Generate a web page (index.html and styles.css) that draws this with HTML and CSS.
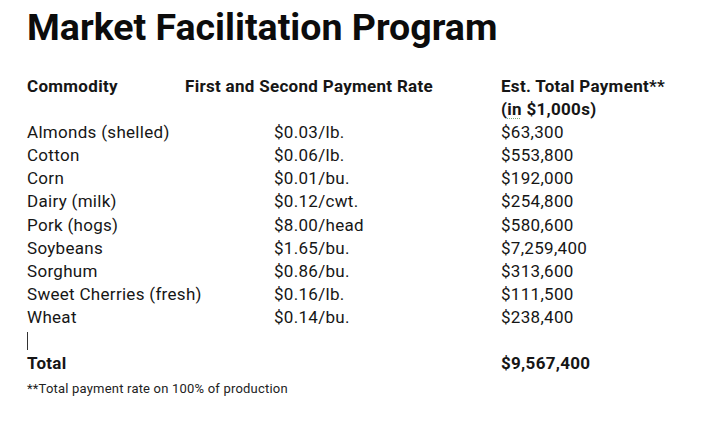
FILE: index.html
```html
<!DOCTYPE html>
<html>
<head>
<meta charset="utf-8">
<link rel="stylesheet" href="styles.css">
</head>
<body>
<div class="page">
  <h1 class="title">Market Facilitation Program</h1>
  <div class="head">
    <div class="hcell">Commodity</div>
    <div class="hcell">First and Second Payment Rate</div>
    <div class="hcell">Est. Total Payment**<br>(<span class="squiggle">in</span> $1,000s)</div>
  </div>
  <div class="rows">
    <div class="row"><span>Almonds (shelled)</span><span>$0.03/lb.</span><span>$63,300</span></div>
    <div class="row"><span>Cotton</span><span>$0.06/lb.</span><span>$553,800</span></div>
    <div class="row"><span>Corn</span><span>$0.01/bu.</span><span>$192,000</span></div>
    <div class="row"><span>Dairy (milk)</span><span>$0.12/cwt.</span><span>$254,800</span></div>
    <div class="row"><span>Pork (hogs)</span><span>$8.00/head</span><span>$580,600</span></div>
    <div class="row"><span>Soybeans</span><span>$1.65/bu.</span><span>$7,259,400</span></div>
    <div class="row"><span>Sorghum</span><span>$0.86/bu.</span><span>$313,600</span></div>
    <div class="row"><span>Sweet Cherries (fresh)</span><span>$0.16/lb.</span><span>$111,500</span></div>
    <div class="row"><span>Wheat</span><span>$0.14/bu.</span><span>$238,400</span></div>
    <div class="row empty"><span class="cursor"></span></div>
    <div class="row total"><span>Total</span><span></span><span>$9,567,400</span></div>
  </div>
  <p class="note">**Total payment rate on 100% of production</p>
</div>
</body>
</html>
```

FILE: styles.css
```css
html, body {
  margin: 0;
  padding: 0;
  background: #ffffff;
}
body {
  font-family: Roboto, "Liberation Sans", sans-serif;
  color: #161616;
  width: 720px;
  height: 421px;
  overflow: hidden;
}
.page {
  padding: 5px 0 0 27px;
}
.title {
  margin: 0;
  font-size: 37.5px;
  font-weight: 700;
  line-height: 44px;
  color: #0c0c0c;
}
.head {
  margin-top: 26px;
  display: grid;
  grid-template-columns: 158px 316px 1fr;
  font-size: 17px;
  font-weight: 700;
  line-height: 23.1px;
  letter-spacing: 0.3px;
}
.squiggle {
  text-decoration: underline dotted #7fae7f;
  text-decoration-thickness: 1px;
  text-underline-offset: 3px;
}
.rows {
  display: flex;
  flex-direction: column;
}
.row {
  display: grid;
  grid-template-columns: 247px 227px 1fr;
  font-size: 17px;
  line-height: 23.1px;
  height: 23.1px;
  letter-spacing: 0.3px;
}
.row.total {
  font-weight: 700;
}
.empty {
  align-items: center;
}
.cursor {
  display: block;
  width: 1px;
  height: 18px;
  background: #333;
}
.note {
  margin: 6px 0 0;
  font-size: 13px;
  line-height: 16px;
  letter-spacing: 0.2px;
  color: #222;
}
```
